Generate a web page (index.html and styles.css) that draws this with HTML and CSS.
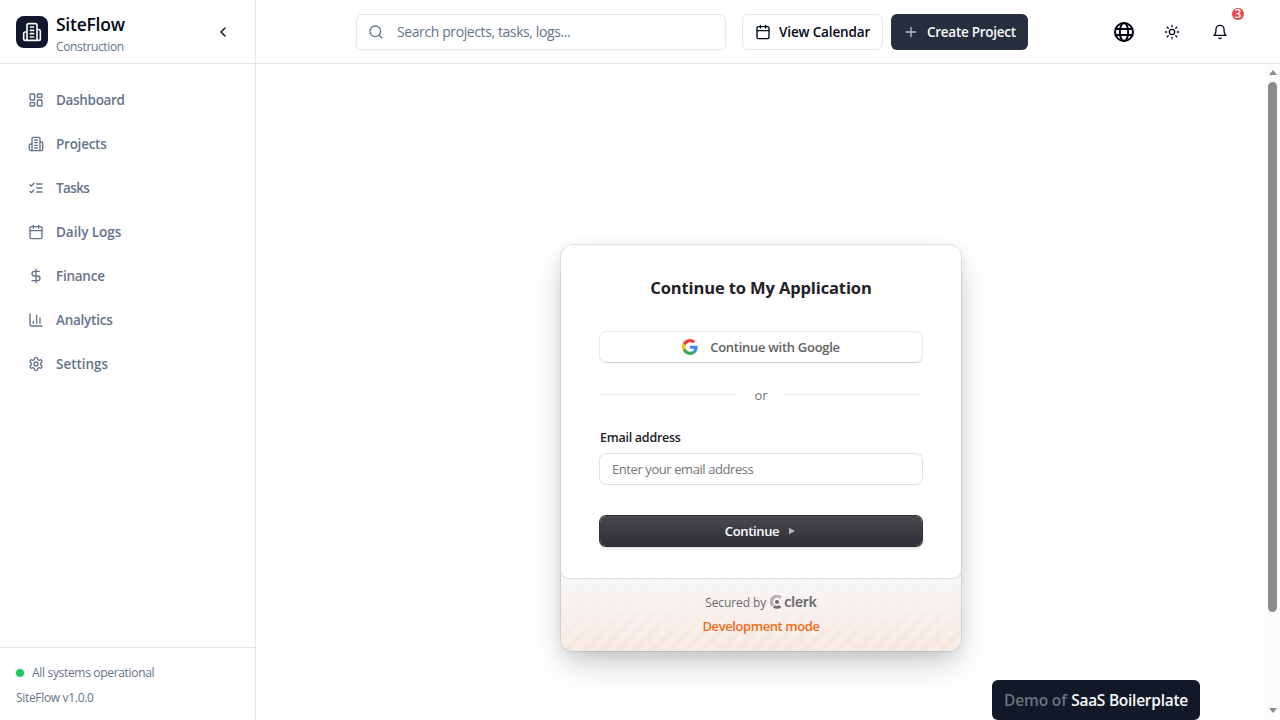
FILE: index.html
```html
<!DOCTYPE html>
<html lang="en">
<head>
<meta charset="utf-8">
<title>SiteFlow</title>
<link rel="stylesheet" href="styles.css">
</head>
<body>
<div class="app">
  <aside class="sidebar">
    <div class="brand">
      <div class="brand-logo"><svg class="i20" viewBox="0 0 24 24"><path d="M6 22V4a2 2 0 0 1 2-2h8a2 2 0 0 1 2 2v18Z"/><path d="M6 12H4a2 2 0 0 0-2 2v6a2 2 0 0 0 2 2h2"/><path d="M18 9h2a2 2 0 0 1 2 2v9a2 2 0 0 1-2 2h-2"/><path d="M10 6h4M10 10h4M10 14h4M10 18h4"/></svg></div>
      <div class="brand-text"><div><span class="brand-name">SiteFlow</span></div><div><span class="brand-sub">Construction</span></div></div>
      <button class="collapse"><svg class="i16" viewBox="0 0 24 24"><path d="m15 18-6-6 6-6"/></svg></button>
    </div>
    <nav class="nav">
      <a class="nav-item"><svg class="i16" viewBox="0 0 24 24"><rect x="3" y="3" width="7" height="9" rx="1"/><rect x="14" y="3" width="7" height="5" rx="1"/><rect x="14" y="12" width="7" height="9" rx="1"/><rect x="3" y="16" width="7" height="5" rx="1"/></svg><span class="tight">Dashboard</span></a>
      <a class="nav-item"><svg class="i16" viewBox="0 0 24 24"><path d="M6 22V4a2 2 0 0 1 2-2h8a2 2 0 0 1 2 2v18Z"/><path d="M6 12H4a2 2 0 0 0-2 2v6a2 2 0 0 0 2 2h2"/><path d="M18 9h2a2 2 0 0 1 2 2v9a2 2 0 0 1-2 2h-2"/><path d="M10 6h4M10 10h4M10 14h4M10 18h4"/></svg><span>Projects</span></a>
      <a class="nav-item"><svg class="i16" viewBox="0 0 24 24"><path d="m3 17 2 2 4-4"/><path d="m3 7 2 2 4-4"/><path d="M13 6h8M13 12h8M13 18h8"/></svg><span class="tightest">Tasks</span></a>
      <a class="nav-item"><svg class="i16" viewBox="0 0 24 24"><path d="M8 2v4M16 2v4"/><rect x="3" y="4" width="18" height="18" rx="2"/><path d="M3 10h18"/></svg><span class="loose">Daily Logs</span></a>
      <a class="nav-item"><svg class="i16" viewBox="0 0 24 24"><path d="M12 2v20"/><path d="M17 5H9.5a3.5 3.5 0 0 0 0 7h5a3.5 3.5 0 0 1 0 7H6"/></svg><span>Finance</span></a>
      <a class="nav-item"><svg class="i16" viewBox="0 0 24 24"><path d="M3 3v16a2 2 0 0 0 2 2h16"/><path d="M18 17V9M13 17V5M8 17v-3"/></svg><span>Analytics</span></a>
      <a class="nav-item"><svg class="i16" viewBox="0 0 24 24"><path d="M12.22 2h-.44a2 2 0 0 0-2 2v.18a2 2 0 0 1-1 1.73l-.43.25a2 2 0 0 1-2 0l-.15-.08a2 2 0 0 0-2.73.73l-.22.38a2 2 0 0 0 .73 2.73l.15.1a2 2 0 0 1 1 1.72v.51a2 2 0 0 1-1 1.74l-.15.09a2 2 0 0 0-.73 2.73l.22.38a2 2 0 0 0 2.73.73l.15-.08a2 2 0 0 1 2 0l.43.25a2 2 0 0 1 1 1.73V20a2 2 0 0 0 2 2h.44a2 2 0 0 0 2-2v-.18a2 2 0 0 1 1-1.73l.43-.25a2 2 0 0 1 2 0l.15.08a2 2 0 0 0 2.73-.73l.22-.39a2 2 0 0 0-.73-2.73l-.15-.08a2 2 0 0 1-1-1.74v-.5a2 2 0 0 1 1-1.74l.15-.09a2 2 0 0 0 .73-2.73l-.22-.38a2 2 0 0 0-2.73-.73l-.15.08a2 2 0 0 1-2 0l-.43-.25a2 2 0 0 1-1-1.73V4a2 2 0 0 0-2-2z"/><circle cx="12" cy="12" r="3"/></svg><span class="loose">Settings</span></a>
    </nav>
    <div class="status">
      <div class="status-row"><i class="dot"></i><span class="status-text">All systems operational</span></div>
      <div class="status-row"><span class="version">SiteFlow v1.0.0</span></div>
    </div>
  </aside>
  <div class="main">
    <header class="topbar">
      <div class="search"><svg class="i16" viewBox="0 0 24 24"><circle cx="11" cy="11" r="8"/><path d="m21 21-4.3-4.3"/></svg><span class="search-text">Search projects, tasks, logs...</span></div>
      <button class="btn btn-outline"><svg class="i16" viewBox="0 0 24 24"><path d="M8 2v4M16 2v4"/><rect x="3" y="4" width="18" height="18" rx="2"/><path d="M3 10h18"/></svg><span class="view-text">View Calendar</span></button>
      <button class="btn btn-dark"><svg class="i16 faded" viewBox="0 0 24 24"><path d="M5 12h14M12 5v14"/></svg><span class="create-text">Create Project</span></button>
      <div class="tools">
        <button class="tool"><svg class="i24" viewBox="0 0 24 24"><circle cx="12" cy="12" r="9"/><path d="M3.6 9h16.8M3.6 15h16.8"/><ellipse cx="12" cy="12" rx="4.2" ry="9"/></svg></button>
        <button class="tool"><svg class="i16" viewBox="0 0 24 24"><circle cx="12" cy="12" r="4"/><path d="M12 2v2M12 20v2M4.93 4.93l1.41 1.41M17.66 17.66l1.41 1.41M2 12h2M20 12h2M6.34 17.66l-1.41 1.41M19.07 4.93l-1.41 1.41"/></svg></button>
        <button class="tool"><svg class="i16" viewBox="0 0 24 24"><path d="M6 8a6 6 0 0 1 12 0c0 7 3 9 3 9H3s3-2 3-9"/><path d="M10.3 21a1.94 1.94 0 0 0 3.4 0"/></svg><span class="badge">3</span></button>
      </div>
    </header>
    <div class="content">
      <main class="stage">
        <section class="card">
          <div class="card-body">
            <h1><span class="title">Continue to My Application</span></h1>
            <button class="google"><svg class="glogo" viewBox="0 0 48 48"><path fill="#EA4335" d="M24 9.5c3.54 0 6.71 1.22 9.21 3.6l6.85-6.85C35.9 2.38 30.47 0 24 0 14.62 0 6.51 5.38 2.56 13.22l7.98 6.19C12.43 13.72 17.74 9.5 24 9.5z"/><path fill="#4285F4" d="M46.98 24.55c0-1.57-.15-3.09-.38-4.55H24v9.02h12.94c-.58 2.96-2.26 5.48-4.78 7.18l7.73 6c4.51-4.18 7.09-10.36 7.09-17.65z"/><path fill="#FBBC05" d="M10.53 28.59c-.48-1.45-.76-2.99-.76-4.59s.27-3.14.76-4.59l-7.98-6.19C.92 16.46 0 20.12 0 24c0 3.88.92 7.54 2.56 10.78l7.97-6.19z"/><path fill="#34A853" d="M24 48c6.48 0 11.93-2.13 15.89-5.81l-7.73-6c-2.15 1.45-4.92 2.3-8.16 2.3-6.26 0-11.57-4.22-13.47-9.91l-7.98 6.19C6.51 42.62 14.62 48 24 48z"/></svg><span class="google-text">Continue with Google</span></button>
            <div class="divider"><i></i><span class="or">or</span><i></i></div>
            <div class="label"><span class="label-text">Email address</span></div>
            <div class="field"><span class="field-text">Enter your email address</span></div>
            <button class="continue"><span class="continue-text">Continue</span><svg class="arrow" viewBox="0 0 10 10"><path d="M2 1.8v6.4l6-3.2z"/></svg></button>
          </div>
          <footer class="card-footer">
            <div class="secured"><span class="secured-text">Secured by</span><svg class="clerk-mark" viewBox="0 0 14 14"><path d="M11.8 1.8A6.4 6.4 0 0 0 1.8 11.6L4.2 9.3A3.8 3.8 0 0 1 9.7 4z" opacity=".5"/><circle cx="7" cy="7" r="2"/><path d="M2.8 12.2l2-2a4 4 0 0 0 4.6 0l2 2a6.6 6.6 0 0 1-8.6 0z"/></svg><span class="clerk">clerk</span></div>
            <div class="devmode"><span class="dev-text">Development mode</span></div>
          </footer>
        </section>
      </main>
      <div class="scrollbar"><i class="up"></i><i class="thumb"></i><i class="down"></i></div>
    </div>
  </div>
</div>
<div class="demo"><span class="demo-of">Demo of</span><span class="demo-name">SaaS Boilerplate</span></div>
</body>
</html>
```
FILE: styles.css
```css
* { box-sizing: border-box; }
body { margin: 0; width: 1280px; height: 720px; overflow: hidden; background: #fff; color: #020817; font-family: "Segoe UI", "Open Sans", "Noto Sans", sans-serif; font-size: 14px; line-height: 20px; }
button { font: inherit; color: inherit; background: none; border: 0; padding: 0; margin: 0; }
span { white-space: nowrap; }
svg { flex: none; fill: none; stroke: currentColor; stroke-width: 2; stroke-linecap: round; stroke-linejoin: round; }
.i16 { width: 16px; height: 16px; }
.i20 { width: 20px; height: 20px; }
.i24 { width: 24px; height: 24px; }
.faded { opacity: .7; }
.app { display: flex; height: 720px; }
.sidebar { width: 256px; border-right: 1px solid #e2e8f0; display: flex; flex-direction: column; }
.brand { height: 64px; border-bottom: 1px solid #e2e8f0; padding: 0 16px; display: flex; align-items: center; gap: 8px; }
.brand-logo { width: 32px; height: 32px; border-radius: 8px; background: #0f172a; color: #f8fafc; display: grid; place-items: center; }
.brand-text { flex: 1; line-height: 16px; padding-top: 3px; }
.brand-text > div:first-child { line-height: 26px; }
.brand-text > div:last-child { line-height: 14px; padding-bottom: 2px; }
.brand-name { font-size: 17.5px; font-weight: 600; letter-spacing: -.25px; }
.brand-sub { font-size: 12px; color: #64748b; letter-spacing: -.35px; }
.collapse { width: 32px; height: 32px; display: grid; place-items: center; }
.nav { flex: 1; padding: 16px; display: flex; flex-direction: column; gap: 4px; }
.nav-item { height: 40px; padding: 0 12px; display: flex; align-items: center; gap: 12px; color: #64748b; font-weight: 600; font-size: 13.5px; letter-spacing: -.25px; }
.nav-item .tight { letter-spacing: -.32px; }
.nav-item .tightest { letter-spacing: -.6px; }
.nav-item .loose { letter-spacing: -.03px; }
.status { height: 73px; border-top: 1px solid #e2e8f0; padding: 13px 16px 10px; display: flex; flex-direction: column; font-size: 12px; color: #64748b; }
.status-row { display: flex; align-items: center; gap: 8px; height: 24px; }
.status-row:last-child { padding-top: 1px; }
.status-text, .version { letter-spacing: -.32px; }
.dot { width: 8px; height: 8px; border-radius: 50%; background: #22c55e; margin-bottom: 1px; }
.main { flex: 1; display: flex; flex-direction: column; }
.topbar { height: 64px; border-bottom: 1px solid #e2e8f0; display: flex; align-items: center; padding: 0 44px 0 100px; }
.search { width: 370px; height: 36px; border: 1px solid #e2e8f0; border-radius: 6px; box-shadow: 0 1px 2px rgba(0,0,0,.05); padding-left: 11px; display: flex; align-items: center; gap: 13px; color: #64748b; }
.search-text { letter-spacing: -.4px; }
.btn { height: 36px; border-radius: 6px; display: flex; align-items: center; padding-left: 12px; gap: 8px; font-size: 13.5px; font-weight: 600; letter-spacing: -.27px; }
.view-text { letter-spacing: -.15px; }
.btn-outline { width: 141px; margin-left: 16px; border: 1px solid #e2e8f0; }
.btn-dark { width: 137px; margin-left: 8px; background: #272e3f; color: #f8fafc; }
.tools { margin-left: auto; display: flex; gap: 16px; }
.tool { position: relative; width: 32px; height: 36px; display: grid; place-items: center; }
.badge { position: absolute; top: -6px; left: 28px; width: 12px; height: 12px; border-radius: 50%; background: #ef4444; color: #fff; font-size: 12px; font-weight: 600; line-height: 12px; text-align: center; }
.content { flex: 1; display: flex; min-height: 0; }
.stage { flex: 1; padding: 181px 0 0 1px; display: flex; justify-content: center; align-items: flex-start; }
.card { width: 400px; height: 406px; border-radius: 12px; overflow: hidden; background: #f7f7f7; box-shadow: 0 0 0 1px rgba(0,0,0,.08), 0 15px 35px -5px rgba(25,28,33,.24), 0 5px 15px rgba(0,0,0,.08); display: flex; flex-direction: column; }
.card-body { position: relative; height: 333px; background: #fff; border-radius: 0 0 8px 8px; padding: 31px 39px 0; box-shadow: 0 0 2px rgba(0,0,0,.12), 0 1px 1px rgba(0,0,0,.07); display: flex; flex-direction: column; color: #212126; }
h1 { margin: 0 0 32px; text-align: center; font-size: 17px; line-height: 24px; }
.title { font-size: 16.5px; font-weight: 700; letter-spacing: -.12px; }
.google { height: 30px; border-radius: 6px; box-shadow: 0 0 0 1px rgba(0,0,0,.08), 0 1px 1px rgba(0,0,0,.1); display: flex; align-items: center; justify-content: center; gap: 12px; font-size: 13px; font-weight: 550; letter-spacing: -.28px; color: #616161; }
.glogo { width: 16px; height: 16px; stroke: none; }
.divider { display: flex; align-items: center; gap: 16px; height: 18px; margin-top: 24px; color: #747474; font-size: 13px; }
.divider i { flex: 1; height: 1px; background: #ebebeb; margin-bottom: 2px; }
.label { margin-top: 24px; height: 18px; line-height: 20px; font-size: 12.5px; font-weight: 600; letter-spacing: -.25px; }
.field { margin-top: 8px; height: 30px; border-radius: 6px; box-shadow: 0 0 0 1px rgba(0,0,0,.12); padding: 0 12px; display: flex; align-items: center; font-size: 13px; letter-spacing: -.42px; color: #757575; }
.continue { margin-top: 32px; height: 30px; border-radius: 6px; background: linear-gradient(#48484e, #2f3037); box-shadow: 0 0 0 1px #34353b, 0 2px 3px rgba(0,0,0,.18); color: #fff; display: flex; align-items: center; justify-content: center; gap: 8px; font-size: 13px; font-weight: 600; letter-spacing: -.35px; }
.arrow { width: 10px; height: 10px; fill: #b5b5b8; stroke: none; }
.card-footer { flex: 1; padding-top: 14px; background: linear-gradient(#f7f7f7 0%, rgba(247,247,247,0) 100%), repeating-linear-gradient(-45deg, #f7e6dd 0 6px, #f6ece8 6px 12px); display: flex; flex-direction: column; align-items: center; }
.secured { height: 20px; display: flex; align-items: center; color: #6a6a70; font-size: 12px; }
.secured-text { padding-top: 1px; letter-spacing: -.1px; }
.clerk-mark { width: 14px; height: 14px; margin-left: 4px; margin-bottom: 1px; fill: #6b6b70; stroke: none; }
.clerk { font-family: Lato, sans-serif; font-weight: 700; font-size: 15px; color: #6b6b70; padding-bottom: 2px; }
.devmode { height: 20px; margin-top: 4px; font-size: 13px; font-weight: 600; letter-spacing: -.42px; color: #f36b16; }
.scrollbar { width: 15px; background: #fcfcfc; display: flex; flex-direction: column; align-items: center; padding-top: 6px; }
.up, .down { border: 4.5px solid transparent; }
.up { border-top: 0; border-bottom: 5px solid #8b8b8b; }
.down { border-bottom: 0; border-top: 5px solid #8b8b8b; margin-top: 96px; }
.thumb { width: 9px; height: 530px; border-radius: 5px; background: #8b8b8b; margin-top: 7px; }
.demo { position: absolute; left: 992px; top: 680px; width: 208px; height: 40px; border-radius: 6px; background: #111827; display: flex; align-items: center; padding: 0 12px; justify-content: space-between; font-size: 15.5px; font-weight: 600; letter-spacing: -.26px; color: #f8fafc; }
.demo-of { color: #6b7280; letter-spacing: -.15px; }
```
